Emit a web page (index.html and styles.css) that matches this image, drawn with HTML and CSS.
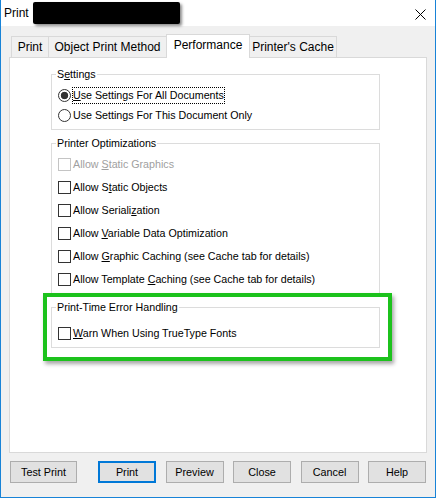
FILE: index.html
```html
<!DOCTYPE html>
<html>
<head>
<meta charset="utf-8">
<link rel="stylesheet" href="styles.css">
</head>
<body>
<div class="window">
  <div class="titlebar">
    <span class="title">Print</span>
    <span class="redact"></span>
    <span class="close"><svg width="11" height="11" viewBox="0 0 11 11"><path d="M0.5 0.5L10.5 10.5M10.5 0.5L0.5 10.5" stroke="#000" stroke-width="1" fill="none"/></svg></span>
  </div>
  <div class="tabs">
    <div class="tab t-print">Print</div>
    <div class="tab t-object">Object Print Method</div>
    <div class="tab t-perf active">Performance</div>
    <div class="tab t-cache">Printer's Cache</div>
  </div>
  <div class="panel">
    <fieldset class="group g-settings">
      <legend>S<u>e</u>ttings</legend>
      <div class="row"><span class="box radio checked tight"></span><span class="focus"><u>U</u>se Settings For All Documents</span></div>
      <div class="row"><span class="box radio"></span><span>Use Settings For This Document Only</span></div>
    </fieldset>
    <fieldset class="group g-opt">
      <legend>Printer Optimizations</legend>
      <div class="row disabled"><span class="box"></span><span>Allow <u>S</u>tatic Graphics</span></div>
      <div class="row"><span class="box"></span><span>Allow S<u>t</u>atic Objects</span></div>
      <div class="row"><span class="box"></span><span>Allow Seriali<u>z</u>ation</span></div>
      <div class="row"><span class="box"></span><span>Allow <u>V</u>ariable Data Optimization</span></div>
      <div class="row"><span class="box"></span><span>Allow <u>G</u>raphic Caching (see Cache tab for details)</span></div>
      <div class="row"><span class="box"></span><span>Allow Template <u>C</u>aching (see Cache tab for details)</span></div>
    </fieldset>
    <fieldset class="group g-err">
      <legend>Print-Time Error Handling</legend>
      <div class="row"><span class="box"></span><span><u>W</u>arn When Using TrueType Fonts</span></div>
    </fieldset>
    <div class="highlight"></div>
  </div>
  <div class="buttons">
    <div class="btn wide">Test Print</div>
    <div class="btn default">Print</div>
    <div class="btn">Preview</div>
    <div class="btn">Close</div>
    <div class="btn">Cancel</div>
    <div class="btn">Help</div>
  </div>
</div>
</body>
</html>
```

FILE: styles.css
```css
* { box-sizing: border-box; }
html, body { margin: 0; padding: 0; }
body {
  width: 436px;
  height: 498px;
  overflow: hidden;
  font-family: "Liberation Sans", Arial, sans-serif;
  color: #000;
  background: #f0f0f0;
}
.window {
  width: 436px;
  height: 498px;
  display: flex;
  flex-direction: column;
  border: 1px solid #1883d7;
  border-top: none;
  background: #f0f0f0;
}
.titlebar {
  height: 26px;
  flex: none;
  background: #fff;
  display: flex;
  align-items: center;
  padding-left: 3px;
}
.title { font-size: 12px; line-height: 16px; }
.redact {
  width: 147px;
  height: 22px;
  background: #000;
  margin-left: 4px;
  align-self: flex-start;
  margin-top: 2px;
  border-radius: 2px;
  box-shadow: 2px 2px 3px rgba(0,0,0,0.45);
}
.close {
  margin-left: auto;
  margin-right: 9px;
  align-self: flex-start;
  margin-top: 9px;
  width: 11px;
  height: 11px;
  display: block;
}
.close svg { display: block; }
.tabs {
  height: 31px;
  flex: none;
  display: flex;
  align-items: flex-end;
  padding-left: 10px;
}
.tab {
  height: 21px;
  border: 1px solid #d9d9d9;
  border-bottom: none;
  margin-left: -1px;
  font-size: 12px;
  line-height: 20px;
  text-align: center;
  background: #f0f0f0;
}
.t-print { width: 38px; margin-left: 0; }
.t-object { width: 119px; }
.t-perf { width: 84px; }
.t-cache { width: 88px; }
.tab.active {
  height: 24px;
  margin-bottom: -1px;
  background: #fff;
  position: relative;
  z-index: 1;
  line-height: 20px;
}
.panel {
  margin: 0 8px;
  height: 396px;
  flex: none;
  background: #fff;
  border: 1px solid #d9d9d9;
  padding: 8px 0 0 41px;
  position: relative;
}
.group {
  width: 329px;
  margin: 0;
  padding: 0 0 0 6px;
  border: 1px solid #dcdcdc;
  min-width: 0;
}
.group legend {
  font-size: 10.7px;
  line-height: 16px;
  padding: 0 1px;
  margin-left: -2px;
}
.g-settings { padding-top: 3px; padding-bottom: 4px; }
.g-settings .row { height: 20px; }
.g-opt { margin-top: 5px; padding-top: 2px; padding-bottom: 2px; }
.g-err { margin-top: 5px; padding-top: 7px; padding-bottom: 3px; }
.g-err .row { height: 22px; }
.row {
  display: flex;
  align-items: center;
  height: 23px;
  font-size: 10.7px;
  line-height: 15px;
  white-space: nowrap;
}
.box {
  width: 13px;
  height: 13px;
  border: 1px solid #333;
  background: #fff;
  margin-right: 2px;
  flex: none;
}
.box.tight { margin-right: 1px; }
.radio { border-radius: 50%; }
.radio.checked { background: radial-gradient(circle, #333 0 3.4px, #fff 4.1px); }
.row.disabled { color: #a0a0a0; }
.row.disabled .box { border-color: #c4c4c4; }
.focus {
  border: 1px dotted #000;
  height: 17px;
  line-height: 15px;
}
.highlight {
  position: absolute;
  left: 33px;
  top: 235px;
  width: 349px;
  height: 68px;
  border: 4px solid #1cc21c;
  box-shadow: 2px 3px 4px rgba(0,0,0,0.35);
}
.buttons {
  display: flex;
  padding: 8px 0 0 9px;
  gap: 9.5px;
}
.btn {
  width: 58px;
  height: 22px;
  border: 1px solid #adadad;
  background: #e1e1e1;
  font-size: 10.8px;
  display: flex;
  align-items: center;
  justify-content: center;
}
.btn.wide { width: 67px; margin-right: 11.5px; }
.btn.default { border: 2px solid #0078d7; }
```
